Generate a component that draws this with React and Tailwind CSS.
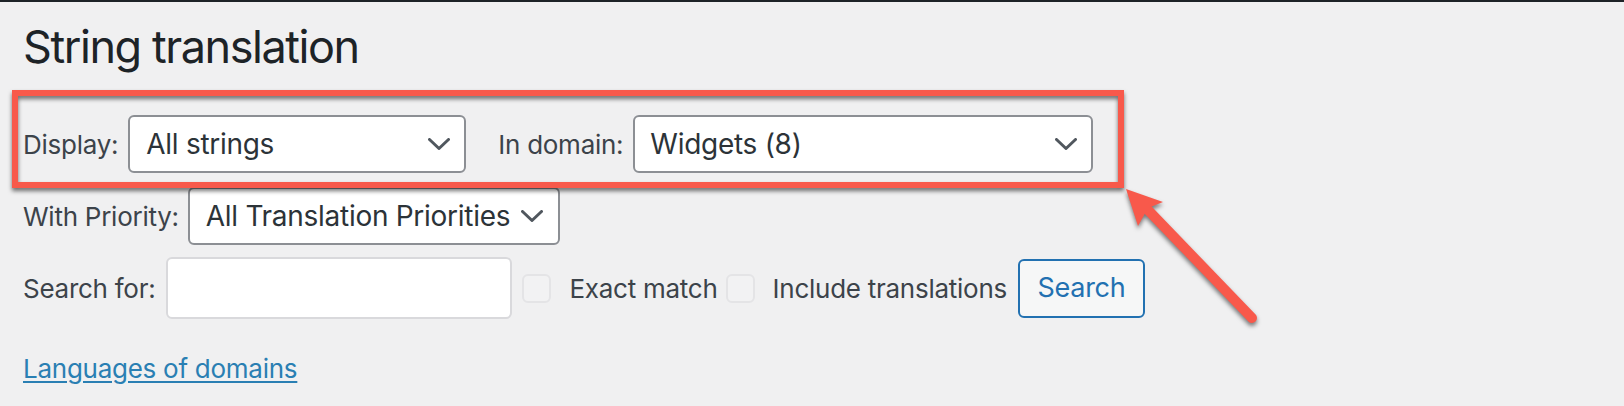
import React from "react";

function Chevron() {
  return (
    <svg width="22" height="12" viewBox="0 0 22 12" className="shrink-0">
      <polyline points="1.5,1.5 11,10.5 20.5,1.5" fill="none" stroke="#50575e" strokeWidth="3" strokeLinecap="round" strokeLinejoin="round" />
    </svg>
  );
}

function Select({ value, className }) {
  return (
    <div className={`flex h-full items-center justify-between rounded-[6px] border-2 border-[#8c8f94] bg-white text-[28px] tracking-[-0.01em] text-[#2c3338] ${className}`}>
      <span className="whitespace-nowrap">{value}</span>
      <Chevron />
    </div>
  );
}

function Checkbox() {
  return <div className="h-[29px] w-[29px] shrink-0 rounded-[6px] border-2 border-[#e4e4e6] bg-[#f2f2f3]" />;
}

export default function App() {
  return (
    <div className="relative h-[406px] w-[1624px] overflow-hidden bg-[#f0f0f1] font-['Inter',sans-serif] text-[#3c434a]">
      <div className="h-[2px] bg-[#1d2327]" />
      <div className="px-[23px]">
        <h1 className="mt-[21px] text-[45px] leading-[47px] font-normal tracking-[-0.032em] text-[#1d2327]">String translation</h1>

        <div className="mt-[45px] flex h-[58px] items-center text-[26px] tracking-[-0.01em]">
          <span>Display:</span>
          <Select value="All strings" className="ml-[10px] w-[338px] pl-[16px] pr-[14px]" />
          <span className="ml-[32px]">In domain:</span>
          <Select value="Widgets (8)" className="ml-[10px] w-[460px] pl-[15px] pr-[14px]" />
        </div>

        <div className="mt-[14px] flex h-[58px] items-center text-[26px] tracking-[-0.01em]">
          <span>With Priority:</span>
          <Select value="All Translation Priorities" className="ml-[9px] w-[372px] pl-[16px] pr-[15px]" />
        </div>

        <div className="mt-[12px] flex h-[62px] items-center text-[26px] tracking-[-0.01em]">
          <span>Search for:</span>
          <div className="ml-[11px] h-full w-[346px] rounded-[6px] border-2 border-[#d9d9dc] bg-white" />
          <div className="ml-[10px]"><Checkbox /></div>
          <span className="ml-[18px]">Exact match</span>
          <div className="ml-[8px]"><Checkbox /></div>
          <span className="ml-[18px]">Include translations</span>
          <button className="ml-[11px] flex h-[59px] w-[127px] items-center justify-center rounded-[6px] border-2 border-[#2271b1] bg-[#f6f7f7] text-[27px] text-[#2271b1]">
            Search
          </button>
        </div>

        <div className="mt-[34px] text-[26px] leading-[32px] tracking-[-0.01em]">
          <a className="text-[#2a7fb3] underline decoration-[2px] underline-offset-[3px]">Languages of domains</a>
        </div>
      </div>

      {/* annotation box */}
      <div className="pointer-events-none absolute left-[12px] top-[90px] h-[98px] w-[1112px] border-[6px] border-[#f8594b] drop-shadow-[0_3px_2px_rgba(0,0,0,0.55)]" />

      {/* annotation arrow */}
      <svg className="pointer-events-none absolute left-[1100px] top-[170px] drop-shadow-[0_3px_2px_rgba(0,0,0,0.5)]" width="180" height="170" viewBox="1100 170 180 170">
        <line x1="1252" y1="318" x2="1148" y2="210" stroke="#f8594b" strokeWidth="10" strokeLinecap="round" />
        <polygon points="1126,189 1163,202 1148,208 1138,226" fill="#f8594b" />
      </svg>
    </div>
  );
}
